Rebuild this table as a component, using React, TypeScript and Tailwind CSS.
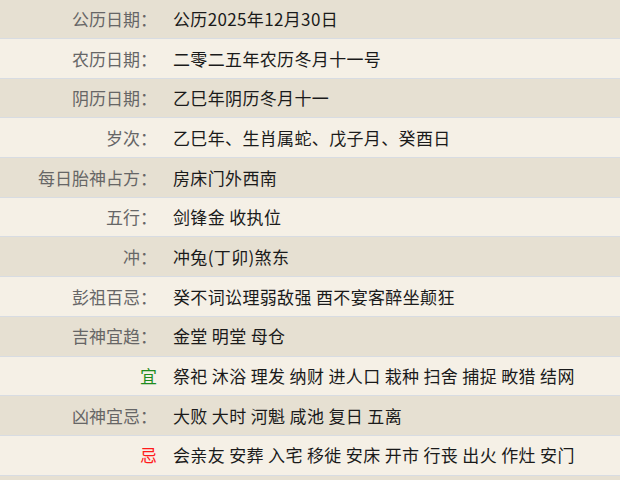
const rows = [
  { label: "公历日期：", value: "公历2025年12月30日" },
  { label: "农历日期：", value: "二零二五年农历冬月十一号" },
  { label: "阴历日期：", value: "乙巳年阴历冬月十一" },
  { label: "岁次：", value: "乙巳年、生肖属蛇、戊子月、癸酉日" },
  { label: "每日胎神占方：", value: "房床门外西南" },
  { label: "五行：", value: "剑锋金 收执位" },
  { label: "冲：", value: "冲兔(丁卯)煞东" },
  { label: "彭祖百忌：", value: "癸不词讼理弱敌强 酉不宴客醉坐颠狂" },
  { label: "吉神宜趋：", value: "金堂 明堂 母仓" },
  { label: "宜", value: "祭祀 沐浴 理发 纳财 进人口 栽种 扫舍 捕捉 畋猎 结网", tone: "good" },
  { label: "凶神宜忌：", value: "大败 大时 河魁 咸池 复日 五离" },
  { label: "忌", value: "会亲友 安葬 入宅 移徙 安床 开市 行丧 出火 作灶 安门", tone: "bad" },
  { label: "", value: "" },
];

const App = () => {
  return (
    <div
      className="w-[620px] h-[480px] overflow-hidden bg-[#f5f0e6]"
      style={{ fontFamily: '"Noto Sans CJK SC", "Noto Sans", sans-serif' }}
    >
      <div className="-mt-[0.7px]">
        {rows.map((row, i) => (
          <div
            key={i}
            className={`flex items-center h-[39.7px] border-b border-[#d8dce2] text-[17px] ${
              i % 2 === 0 ? "bg-[#e6e0d2]" : "bg-[#f5f0e6]"
            }`}
          >
            <div
              className={`w-[157px] shrink-0 text-right ${
                row.tone === "good"
                  ? "text-[#1e8c1e]"
                  : row.tone === "bad"
                  ? "text-[#ff1a1a]"
                  : "text-[#666666]"
              }`}
            >
              {row.label}
            </div>
            <div className="pl-[16px] text-[#1a1a1a] whitespace-nowrap tracking-[0.35px]">
              {row.value}
            </div>
          </div>
        ))}
      </div>
    </div>
  );
};

export default App;
